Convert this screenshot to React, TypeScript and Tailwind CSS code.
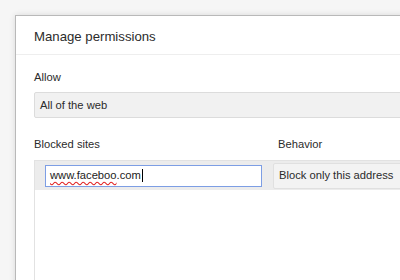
import React from 'react';

const font = { fontFamily: '"Liberation Sans", Arial, sans-serif' };

export default function App() {
  return (
    <div className="w-[400px] h-[280px] overflow-hidden bg-[#f6f6f6] pt-[15px] pl-[15px]" style={font}>
      <div className="w-[420px] h-[300px] bg-white border-l border-t border-[#b9b9b9] shadow-[0_0_6px_rgba(0,0,0,0.12)]">
        {/* Header */}
        <div className="h-[39px] pl-[18px] pt-[13px] border-b border-[#eeeeee]">
          <h1 className="text-[13.2px] leading-[15px] text-[#2b2b2b]">Manage permissions</h1>
        </div>

        <div className="pl-[18px]">
          <div className="mt-[16px] text-[11.2px] leading-[13px] text-[#2b2b2b]">Allow</div>
          <div className="mt-[8px] h-[26px] flex items-center pl-[5px] bg-[#f1f1f1] border border-[#dcdcdc] rounded-[2px] text-[11.2px] text-[#2b2b2b]">
            All of the web
          </div>

          <div className="mt-[20px] flex text-[11.2px] leading-[13px] text-[#2b2b2b]">
            <div className="w-[244px]">Blocked sites</div>
            <div>Behavior</div>
          </div>

          {/* Site list */}
          <div className="mt-[9px] h-[200px] border-l border-t border-[#e2e2e2]">
            <div className="h-[29px] bg-[#ececec] flex items-center pl-[10px] gap-[11px]">
              <div className="w-[217px] h-[22px] shrink-0 bg-white border border-[#7d9ee4] flex items-center pl-[4px] text-[11.2px] text-[#222]">
                <span className="underline decoration-wavy decoration-[#e02020] underline-offset-[2px]">www.faceboo</span>
                <span>.com</span>
                <span className="inline-block w-px h-[13px] bg-black ml-px" />
              </div>
              <div className="w-[200px] h-[26px] shrink-0 flex items-center pl-[5px] bg-[#f3f3f3] border border-[#e0e0e0] rounded-[2px] text-[11.2px] text-[#2b2b2b]">
                Block only this address
              </div>
            </div>
          </div>
        </div>
      </div>
    </div>
  );
}
